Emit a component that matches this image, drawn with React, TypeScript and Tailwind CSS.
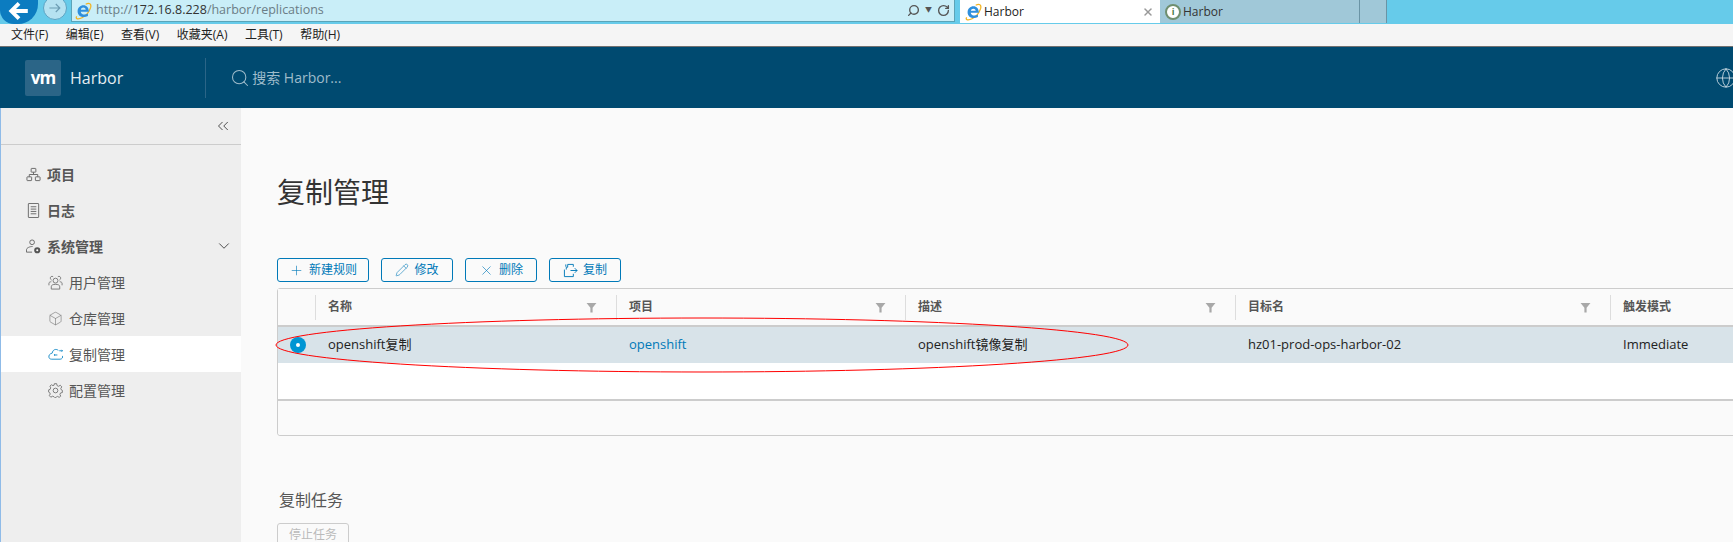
import { Box, ChevronDown, ChevronsLeft, Globe, Pencil, Plus, RotateCw, Search, X } from 'lucide-react'
import type { ReactNode } from 'react'

const cjk = { fontFamily: '"Open Sans", "Noto Sans CJK SC", sans-serif' }

function IeIcon({ className }: { className: string }) {
  return (
    <svg viewBox="0 0 20 20" className={className} fill="none">
      <path d="M3 16C1 19 5 19.500 9 17.500 13 15.500 17 11 18.500 6 19.500 2 17 0.500 13 2.500" stroke="#f2b320" strokeWidth="1.400" />
      <path d="M4 10.500C4 6 7 3.500 10.500 3.500 14 3.500 16.500 6 16.500 10.800H7.500C7.700 14 12 15 15.500 12.800V15.500C10.500 18.500 4 16 4 10.500ZM7.600 8.500H13C12.800 5.500 8 5.500 7.600 8.500Z" fill="#2f8fdc" />
    </svg>
  )
}

function TreeIcon() {
  return (
    <svg viewBox="0 0 16 16" className="h-[15px] w-[15px] shrink-0" fill="none" stroke="#666" strokeWidth="1">
      <rect x="5.500" y="1.500" width="5" height="4" rx="0.500" />
      <rect x="1" y="10.500" width="5" height="4" rx="0.500" />
      <rect x="10" y="10.500" width="5" height="4" rx="0.500" />
      <path d="M8 5.500V8M3.500 10.500V8H12.500V10.500" />
    </svg>
  )
}

function LogIcon() {
  return (
    <svg viewBox="0 0 16 16" className="h-[15px] w-[15px] shrink-0" fill="none" stroke="#666" strokeWidth="1">
      <rect x="2.500" y="0.500" width="11" height="15" rx="0.500" />
      <path d="M5 4H11M5 6.500H11M5 9H11M5 11.500H11" />
    </svg>
  )
}

function AdminIcon() {
  return (
    <svg viewBox="0 0 16 16" className="h-[15px] w-[15px] shrink-0" fill="none" stroke="#666" strokeWidth="1">
      <circle cx="6.500" cy="3.500" r="2.500" />
      <path d="M0.500 14V11.500C0.500 9.500 4 8 7 8" />
      <path d="M0.500 14H6.500" />
      <circle cx="12" cy="12" r="2.200" fill="#fff" stroke="#555" strokeWidth="2.200" />
    </svg>
  )
}

function UsersIcon() {
  return (
    <svg viewBox="0 0 16 16" className="h-[15px] w-[15px] shrink-0" fill="none" stroke="#777" strokeWidth="1">
      <circle cx="8" cy="6" r="2.600" />
      <path d="M3.500 15V12.500C3.500 10.500 5.500 10 8 10 10.500 10 12.500 10.500 12.500 12.500V15Z" />
      <path d="M5.500 1.800C4 0.800 2.300 1.800 2.500 3.500 2.600 4.500 3.200 5 3.800 5.400M1 11V8.800C1 7.800 2 7.300 3.500 7.200" />
      <path d="M10.500 1.800C12 0.800 13.700 1.800 13.500 3.500 13.400 4.500 12.800 5 12.200 5.400M15 11V8.800C15 7.800 14 7.300 12.500 7.200" />
    </svg>
  )
}

function GearIcon() {
  return (
    <svg viewBox="0 0 16 16" className="h-[15px] w-[15px] shrink-0" fill="none" stroke="#777" strokeWidth="1">
      <circle cx="8" cy="8" r="2.500" />
      <path d="M6.800 0.700H9.200L9.700 2.800 11.300 3.500 13.100 2.400 14.700 4.100 13.600 5.900 14.200 7.300 15.300 7.800V10.200L13.400 10.600 12.700 12.200 13.600 14 11.900 15.300 10.200 14.300 8.800 14.900 8.300 15.500H7.200L6.500 14.700 4.900 14.100 3 15.100 1.400 13.500 2.400 11.700 1.800 10.300 0.700 9.700V7.300L2.200 6.800 2.900 5.200 2 3.400 3.600 1.900 5.300 2.800 6.500 2.300Z" />
    </svg>
  )
}

function CloudIcon() {
  return (
    <svg viewBox="0 0 16 16" className="h-[15px] w-[15px] shrink-0" fill="none" stroke="#1b8dc9" strokeWidth="1">
      <path d="M11 3.500C8 1.500 5 3 4.500 6.500 2 7 0.500 9 1 11 1.300 12.500 2.500 13 4 13H13C15 13 16 11 15.500 9.500" />
      <path d="M7 8.500H10M7.500 7.500L6.500 8.500 7.500 9.500M12 4H15.500M14.500 3L15.500 4 14.500 5" />
    </svg>
  )
}

function CopyIcon() {
  return (
    <svg viewBox="0 0 16 16" className="h-[15px] w-[15px] shrink-0" fill="none" stroke="#0079b8" strokeWidth="1">
      <path d="M5 1.500H11V4M3 4V1.500M1.500 7V14.500H11V11.500" />
      <path d="M3.500 7V4.500H5V1.500M8 8H15M12.500 5.500L15 8 12.500 10.500" />
    </svg>
  )
}

function FilterMark() {
  return (
    <svg viewBox="0 0 10 10" className="h-[11px] w-[11px] shrink-0">
      <path d="M0.500 1H9.500L6 5.200V9.500H4V5.200Z" fill="#a8a8a8" />
    </svg>
  )
}

function SideItem({ icon, label, bold, sub, active, after }: { icon: ReactNode; label: string; bold?: boolean; sub?: boolean; active?: boolean; after?: ReactNode }) {
  return (
    <div className={`flex h-9 items-center text-[14px] text-[#565656] ${sub ? 'pl-[47px]' : 'pl-[25px]'} ${active ? 'bg-white' : ''} ${bold ? 'font-bold' : ''}`}>
      <span className="flex w-[21px] shrink-0 items-center">{icon}</span>
      <span>{label}</span>
      {after}
    </div>
  )
}

function ActionButton({ icon, label, width }: { icon: ReactNode; label: string; width: string }) {
  return (
    <button className={`flex h-6 items-center justify-center gap-[5px] rounded-[3px] border border-[#0079b8] text-[12px] text-[#0079b8] ${width}`}>
      {icon}
      {label}
    </button>
  )
}

const columns = [
  { label: '名称', width: 'w-[301px]', value: 'openshift复制', filter: true },
  { label: '项目', width: 'w-[289px]', value: 'openshift', filter: true, link: true },
  { label: '描述', width: 'w-[330px]', value: 'openshift镜像复制', filter: true },
  { label: '目标名', width: 'w-[375px]', value: 'hz01-prod-ops-harbor-02', filter: true },
  { label: '触发模式', width: 'w-[200px]', value: 'Immediate', filter: false },
]

export default function App() {
  return (
    <div className="flex h-[542px] w-[1733px] flex-col overflow-hidden bg-[#fafafa]" style={cjk}>
      {/* browser chrome */}
      <div className="relative flex h-6 shrink-0 items-start overflow-hidden bg-[#66cbea]">
        <div className="flex h-6 w-[38px] shrink-0 items-center justify-center rounded-br-[20px] rounded-bl-[14px] bg-[#0c7cc0]">
          <svg viewBox="0 0 20 20" className="-mt-[3px] h-[22px] w-[22px]" fill="none" stroke="#fff" strokeWidth="3.500">
            <path d="M18 10H4M10 3L3 10 10 17" />
          </svg>
        </div>
        <div className="-mt-[4px] ml-[5px] flex h-6 w-6 shrink-0 items-center justify-center rounded-full border border-[#5ba4c4] bg-[#b5e2f1]">
          <svg viewBox="0 0 20 20" className="h-4 w-4" fill="none" stroke="#6c9db3" strokeWidth="1.500">
            <path d="M3 10H16M11 5L16 10 11 15" />
          </svg>
        </div>
        <div className="ml-1 flex h-[22px] w-[884px] shrink-0 items-center border-b border-l border-r border-[#5ba4b8] bg-[#c9eef8] pl-[2px] pr-[4px]">
          <IeIcon className="h-[18px] w-[18px] shrink-0" />
          <span className="ml-[4px] whitespace-nowrap text-[12.500px] text-[#6b7d86]">
            http://<span className="text-[#333]">172.16.8.228</span>/harbor/replications
          </span>
          <span className="ml-auto flex items-center gap-[5px] text-[#555]">
            <Search className="h-[13px] w-[13px] -scale-x-100" strokeWidth={2.500} />
            <span className="text-[7px]">▼</span>
            <RotateCw className="h-[13px] w-[13px]" strokeWidth={2.500} />
          </span>
        </div>
        <div className="ml-[5px] flex h-[23px] w-[200px] shrink-0 items-center bg-white pl-[4px] pr-[6px] text-[12px] text-[#222]">
          <IeIcon className="h-[18px] w-[18px] shrink-0" />
          <span className="ml-[2px]">Harbor</span>
          <X className="ml-auto h-3 w-3 text-[#999]" strokeWidth={3} />
        </div>
        <div className="flex h-[23px] w-[200px] shrink-0 items-center border-r border-[#6a94a5] bg-[#a0c8d8] pl-[5px] text-[12px] text-[#333]">
          <span className="flex h-4 w-4 items-center justify-center rounded-full border-2 border-[#6f8f6f] bg-white text-[9px] font-bold text-[#4a7a4a]">i</span>
          <span className="ml-[2px]">Harbor</span>
        </div>
        <div className="h-[23px] w-[27px] shrink-0 border-r border-[#6a94a5] bg-[#a0c8d8]" />
      </div>
      <div className="flex h-[23px] shrink-0 items-center gap-[17.500px] border-b border-[#707070] bg-[#f5f5f5] pl-[11px] text-[12px] text-[#222]">
        <span>文件(F)</span>
        <span>编辑(E)</span>
        <span>查看(V)</span>
        <span>收藏夹(A)</span>
        <span>工具(T)</span>
        <span>帮助(H)</span>
      </div>

      {/* harbor header */}
      <header className="flex h-[61px] shrink-0 items-center bg-[#004a70] pl-[25px]">
        <div className="flex h-9 w-9 shrink-0 items-center justify-center rounded-[2px] bg-[#2b6587] text-[17px] font-bold tracking-[-1px] text-white">vm</div>
        <span className="ml-[9px] shrink-0 text-[16px] text-[#e4edf2]">Harbor</span>
        <div className="ml-[82px] h-10 w-px shrink-0 bg-[#2b6587]" />
        <Search className="ml-[24px] h-[20px] w-[20px] shrink-0 text-[#9fbccb]" strokeWidth={1.250} />
        <span className="ml-[2px] w-[90px] shrink-0 whitespace-nowrap text-[14px] text-[#9fbccb]">搜索 Harbor...</span>
        <Globe className="ml-auto mr-[-4px] h-[22px] w-[22px] shrink-0 text-[#c5d6e0]" strokeWidth={1} />
      </header>

      <div className="flex min-h-0 flex-1">
        {/* sidebar */}
        <aside className="w-[241px] shrink-0 border-l border-[#8fbbe8] bg-[#eeeeee]">
          <div className="flex h-[37px] items-center justify-end border-b border-[#ccc] pr-[9px]">
            <ChevronsLeft className="h-[18px] w-[18px] text-[#444]" strokeWidth={1.250} />
          </div>
          <nav className="pt-[11px]">
            <SideItem bold icon={<TreeIcon />} label="项目" />
            <SideItem bold icon={<LogIcon />} label="日志" />
            <SideItem bold icon={<AdminIcon />} label="系统管理" after={<ChevronDown className="ml-auto mr-[8px] h-[18px] w-[18px] text-[#444]" strokeWidth={1.250} />} />
            <SideItem sub icon={<UsersIcon />} label="用户管理" />
            <SideItem sub icon={<Box className="h-[15px] w-[15px] text-[#777]" strokeWidth={1} />} label="仓库管理" />
            <SideItem sub active icon={<CloudIcon />} label="复制管理" />
            <SideItem sub icon={<GearIcon />} label="配置管理" />
          </nav>
        </aside>

        {/* main */}
        <main className="relative min-w-0 flex-1 overflow-hidden pl-[36px] pt-[64px]">
          <h1 className="text-[28px] leading-[40px] text-[#333]">复制管理</h1>
          <div className="mt-[46px] flex gap-3">
            <ActionButton width="w-[92px]" icon={<Plus className="h-[15px] w-[15px]" strokeWidth={1} />} label="新建规则" />
            <ActionButton width="w-[72px]" icon={<Pencil className="h-[14px] w-[14px]" strokeWidth={1} />} label="修改" />
            <ActionButton width="w-[72px]" icon={<X className="h-[15px] w-[15px]" strokeWidth={1} />} label="删除" />
            <ActionButton width="w-[72px]" icon={<CopyIcon />} label="复制" />
          </div>

          <div className="mt-[6px] w-[1540px] rounded-[3px] border border-[#ccc] bg-white">
            <div className="flex h-[38px] items-center border-b-2 border-[#ccc] bg-[#fafafa] text-[12px] font-bold text-[#565656]">
              <div className="h-[25px] w-[37px] shrink-0" />
              {columns.map((col) => (
                <div key={col.label} className={`flex h-[25px] shrink-0 items-center border-l border-[#ddd] pl-3 pr-[19px] ${col.width}`}>
                  <span>{col.label}</span>
                  {col.filter && <span className="ml-auto"><FilterMark /></span>}
                </div>
              ))}
            </div>
            <div className="flex h-[36px] items-center bg-[#d8e3e9] text-[13px] text-[#222]">
              <div className="flex w-[37px] shrink-0 justify-center pl-[2px]">
                <span className="flex h-4 w-4 items-center justify-center rounded-full bg-[#0095d3]">
                  <span className="h-1 w-1 rounded-full bg-white" />
                </span>
              </div>
              {columns.map((col) => (
                <div key={col.label} className={`shrink-0 pl-[13px] ${col.width} ${col.link ? 'text-[#0079b8]' : ''}`}>{col.value}</div>
              ))}
            </div>
            <div className="h-[38px] border-b-2 border-[#ccc]" />
            <div className="h-[34px] rounded-b-[3px] bg-[#fafafa]" />
          </div>

          <h2 className="mt-[52px] pl-[2px] text-[16px] leading-6 text-[#565656]">复制任务</h2>
          <button className="mt-[11px] h-6 w-[72px] rounded-[3px] border border-[#ccc] text-[12px] text-[#bbb]">停止任务</button>

          {/* hand-drawn annotation over the selected row */}
          <svg className="pointer-events-none absolute left-[34px] top-[209px] h-[56px] w-[854px]" viewBox="0 0 854 56" fill="none">
            <ellipse cx="427" cy="28" rx="426" ry="27" stroke="#f00" strokeWidth="1" />
          </svg>
        </main>
      </div>
    </div>
  )
}
